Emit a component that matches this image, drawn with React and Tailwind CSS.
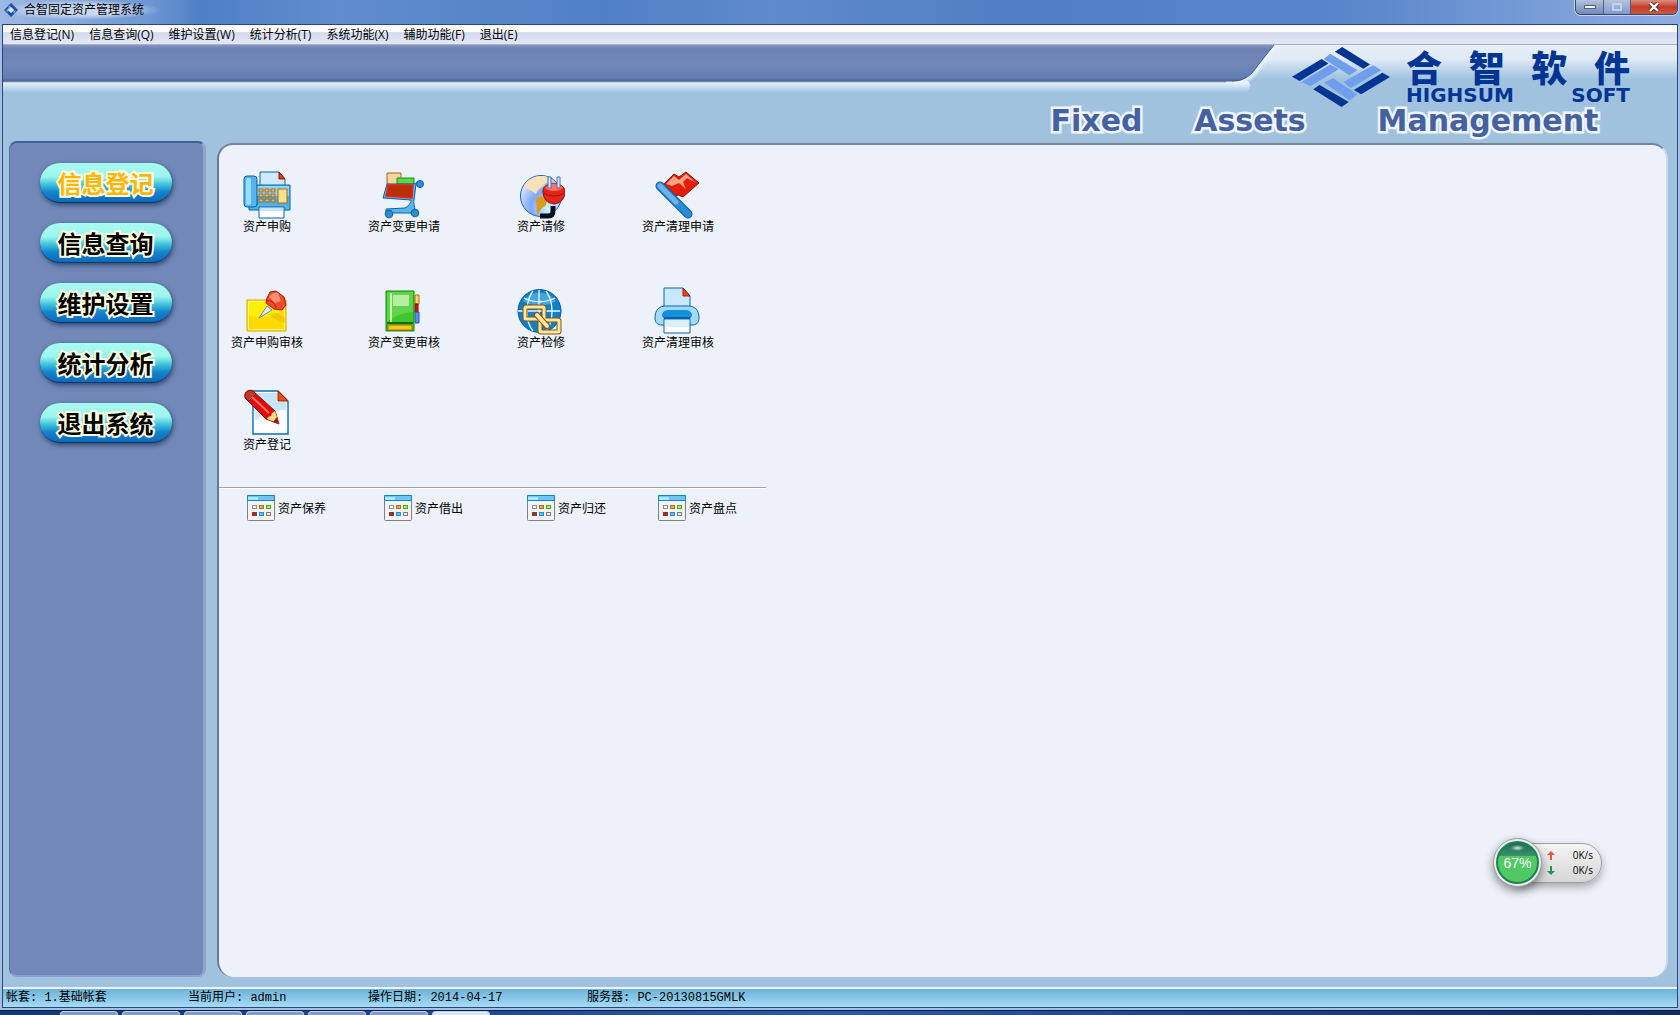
import React from 'react';

const SANS = "font-['Open_Sans','Noto_Sans_CJK_SC',sans-serif]";

const menus = ['信息登记(N)', '信息查询(Q)', '维护设置(W)', '统计分析(T)', '系统功能(X)', '辅助功能(F)', '退出(E)'];

const navItems = ['信息登记', '信息查询', '维护设置', '统计分析', '退出系统'];

const FaxIcon = () => (
  <>
    <path d="M17 14V1h19l6 7v6" fill="#cfe9ff" stroke="#0b67ad" />
    <path d="M36 1v7h6z" fill="#e03a10" stroke="#8c1500" />
    <path d="M6 34h8V14h33v25H6z" fill="#4db4ea" stroke="#0a63a8" />
    <path d="M14 15h32v10H14z" fill="#8fd6fa" />
    <rect x="1" y="5" width="13" height="31" rx="3" fill="#54b5ec" stroke="#0a63a8" />
    <rect x="3" y="7" width="5" height="27" rx="2" fill="#9bdcfb" />
    {[18, 23, 28].map((y) => [16, 22, 28].map((x) => (
      <rect key={`${x}-${y}`} x={x} y={y} width="4" height="3" fill="#f2b650" stroke="#9a5a10" strokeWidth=".8" />
    )))}
    <rect x="35" y="18" width="9" height="14" fill="#ffe08a" stroke="#a8660f" />
    <path d="M16 36h25v11H16z" fill="#fff" stroke="#0a63a8" />
    <path d="M17 37h23v3H17z" fill="#c7e4fa" />
  </>
);

const CartIcon = () => (
  <>
    <path d="M7 13V2h14v12z" fill="#f8d79a" stroke="#9c6320" />
    <path d="M17 13V7h17v6z" fill="#5fd845" stroke="#1f8a1c" />
    <path d="M40 10 34 13H7L3 27l28 2c0 4-3 6-6 8l-19 1v4h28c2-6-1-9 0-13l2-16z" fill="#58b6ea" stroke="#0a63a8" />
    <path d="M8 14h25l-1 13-26-2z" fill="#b83000" stroke="#f0201a" strokeWidth="1.5" />
    <circle cx="40" cy="13" r="3.5" fill="#2a90d4" stroke="#0a5ea2" />
    <circle cx="9" cy="43" r="3.8" fill="#2a90d4" stroke="#0a5ea2" />
    <circle cx="35" cy="42" r="3.8" fill="#2a90d4" stroke="#0a5ea2" />
  </>
);

const PlugIcon = () => (
  <>
    <defs>
      <radialGradient id="globe" cx=".7" cy=".8" r=".9">
        <stop offset="0" stopColor="#d9fbff" />
        <stop offset=".5" stopColor="#7fa6ff" />
        <stop offset="1" stopColor="#f2f4ff" />
      </radialGradient>
    </defs>
    <circle cx="24" cy="25" r="20.5" fill="url(#globe)" stroke="#1c5fb8" />
    <path d="M7 16c3-7 9-11 17-11 6 0 10 2 12 5-5 1-8 1-9 4-2 2-4 3-6 5l-2 4-4-3z" fill="#f5e3b5" />
    <path d="M19 27l5-2 6 4-1 5-5 4-3 6c-3-4 0-7-2-11z" fill="#d99a1e" />
    <path d="M36 35v5c0 4-2 5-5 5h-8" fill="none" stroke="#0a0f20" strokeWidth="5" />
    <path d="M26 20c0-10 21-10 22 0 0 8-4 12-11 13-7-1-11-5-11-13z" fill="#e22718" stroke="#8e0d08" />
    <path d="M28 17c5-6 14-6 18 0-5 4-13 4-18 0z" fill="#ff7563" />
    <path d="M27 22c5 4 15 4 20 0" fill="none" stroke="#a50f0a" />
    <path d="M31 6h3v11h-3zM40 6h3v11h-3z" fill="#dfe8ff" stroke="#4a68b8" />
  </>
);

const FlagIcon = () => (
  <>
    <path d="M10 13 20 3l5 3 7-5 13 11-16 14-5-2-5 2z" fill="#e41c08" stroke="#991008" />
    <path d="m12 13 8-8 5 4 7-6 10 9-9-5-4 4 3 7-7-6-7 3z" fill="#ffa489" />
    <path d="M6 15 34 43" stroke="#0a5fa4" strokeWidth="9" strokeLinecap="round" />
    <path d="M6 15 34 43" stroke="#2b8bd4" strokeWidth="7" strokeLinecap="round" />
    <path d="M6 15 22 31" stroke="#6fb4e4" strokeWidth="5" strokeLinecap="round" />
  </>
);

const PinIcon = () => (
  <>
    <path d="M4 13h39v31H4z" fill="#ffef00" stroke="#d9a400" />
    <path d="M5 28c12 4 25 3 37-6v21H5z" fill="#ffd900" />
    <path d="M5.5 14.5h36v28h-36z" fill="none" stroke="#fff384" />
    <path d="m25 27 9-1 8 5v5c-6-1-11-5-17-9z" fill="#e9b800" opacity=".5" />
    <path d="m16 31 8-12 5 4z" fill="#e3e8f5" stroke="#7884a5" />
    <path d="m24 11 3-6 6-1 8 6 2 8-4 5-8-1-8-6z" fill="#f3482d" stroke="#a31609" />
    <path d="M26 10c2-4 6-5 9-4l3 8-6 2z" fill="#ff8f74" />
    <path d="M24 14c3-2 9 3 9 7" fill="none" stroke="#bb1e0e" />
  </>
);

const BookIcon = () => (
  <>
    <path d="M35 8h4v9h-4z" fill="#ffd36b" stroke="#b36a10" />
    <path d="M35 17h3v8h-3z" fill="#d61010" stroke="#8f0505" />
    <path d="M35 25h4v11h-4z" fill="#5f8df0" stroke="#2850b4" />
    <path d="M6 4h28v40H6z" fill="#3fc72d" stroke="#128a12" />
    <path d="M7 5h26v20c-12 1-20 5-26 10z" fill="#63d24b" />
    <path d="M10 6h2v29h-2z" fill="#c6f5b4" />
    <path d="M13 8h16v11H13z" fill="#b4efa2" />
    <path d="M7 36h26" stroke="#0c7010" strokeWidth="2" />
    <path d="M8 38h24v5H8z" fill="#ffc91c" stroke="#a06c00" />
  </>
);

const LinkIcon = () => (
  <>
    <circle cx="22.5" cy="24" r="21.5" fill="#0f80c8" stroke="#0a569c" />
    <path d="M6 14C14 3 31 3 39 14c-10 6-23 6-33 0z" fill="#5fb4e4" opacity=".7" />
    <path d="M22 3v42M1 24h42M7 11c9 5 22 5 31 0M16 4C8 15 8 34 16 44M29 4c8 11 8 30 0 40" fill="none" stroke="#e6f7ff" strokeWidth="1.3" />
    {['#8a5208', '#ffe6a0'].map((c, i) => (
      <g key={c} fill="none" stroke={c} strokeWidth={i ? 3 : 5} strokeLinejoin="round">
        <rect x="8" y="20" width="19" height="12" rx="1" />
        <rect x="23" y="33" width="19" height="12" rx="1" />
      </g>
    ))}
    <path d="m20 28 10 11" stroke="#8a5208" strokeWidth="6" strokeLinecap="round" />
    <path d="m20 28 10 11" stroke="#ffe6a0" strokeWidth="4" strokeLinecap="round" />
  </>
);

const PrinterIcon = () => (
  <>
    <path d="M10 24V1h19l7 8v15z" fill="#c8e8ff" stroke="#0b67ad" />
    <path d="M29 1v8h7z" fill="#ee4312" stroke="#9c1c00" />
    <path d="M1 31c0-9 5-12 11-12h22c6 0 11 3 11 12 0 5-3 7-7 7H8c-4 0-7-2-7-7z" fill="#a3daf9" stroke="#0a63a8" />
    <path d="M8 29c0-4 3-6 6-6h18c3 0 6 2 6 6l-3 3H11z" fill="#1590dc" />
    <path d="M9 30h28l-2 3H11z" fill="#0661a8" />
    <path d="M10 32h26v14H10z" fill="#fff" stroke="#0a63a8" />
    <path d="M11 33h24v7H11z" fill="#d9effc" />
  </>
);

const PencilIcon = () => (
  <>
    <path d="M10 2h25l10 10v33H10z" fill="#fff" stroke="#0b6db3" strokeWidth="1.4" />
    <path d="M12 4h22v9h9v8c-12 0-22 5-31 10z" fill="#c6e5ff" />
    <path d="M35 2v10h10z" fill="#ef4a10" stroke="#9c1c00" />
    <path d="M2 6c0-3 4-6 8-4l22 20 4 13-13-5L3 10c-1-1-1-3-1-4z" fill="#e00d06" stroke="#8c0a05" />
    <path d="M2 6c0-3 4-6 8-4l3 3-7 7-3-2c-1-1-1-3-1-4z" fill="#c03a2c" stroke="#8c0a05" />
    <path d="m9 8 17 16" stroke="#ff7263" strokeWidth="2" />
    <path d="m32 22-3 2-1 3-3 1-1 2 12 5z" fill="#ffd98a" />
    <path d="m30 33 6 2-2-7z" fill="#9a1a10" />
  </>
);

const TableIcon = () => (
  <svg viewBox="0 0 28 26" className="h-[26px] w-7 shrink-0">
    <rect x=".5" y=".5" width="27" height="25" rx="1" fill="#f2f2f2" stroke="#808080" />
    <path d="M.5.5h27v5H.5z" fill="#6cc6f8" stroke="#1782c0" />
    <path d="M1 2h10v3H1z" fill="#a5ecff" />
    {[
      [5, 10, '#fff', '#8f8f8f'], [12, 10, '#efb24a', '#a86a25'], [19, 10, '#aef26d', '#45a812'],
      [5, 17, '#d81a0c', '#704040'], [12, 17, '#63c1fb', '#1d8fdc'], [19, 17, '#e8e8e8', '#7d7d7d'],
    ].map(([x, y, fill, stroke]) => (
      <rect key={`${x}-${y}`} x={x + 0.5} y={y + 0.5} width="4" height="3" fill={fill} stroke={stroke} />
    ))}
  </svg>
);

const rows = [
  {
    gap: 'pb-[54px]',
    items: [['资产申购', FaxIcon], ['资产变更申请', CartIcon], ['资产请修', PlugIcon], ['资产清理申请', FlagIcon]],
  },
  {
    gap: 'pb-10',
    items: [['资产申购审核', PinIcon], ['资产变更审核', BookIcon], ['资产检修', LinkIcon], ['资产清理审核', PrinterIcon]],
  },
  { gap: 'pb-9', items: [['资产登记', PencilIcon]] },
];

const shortcuts = ['资产保养', '资产借出', '资产归还', '资产盘点'];

const Diamond = ({ className }) => (
  <svg viewBox="33 142 295 180" className={className}>
    <g fill="#003594">
      <path d="M184 142l84 52-20 13-86-51z" />
      <path d="M33 231l89-53 21 13-87 53z" />
      <path d="M328 232l-23-13-86 52 22 13z" />
      <path d="M116 256l-19 13 85 53 22-15z" />
    </g>
    <g fill="#6f9fec">
      <path d="M148 162l82 50-24 15-78-49z" />
      <path d="M148 194l26 15-86 51-26-13z" />
      <path d="M277 197l25 15-92 53-22-18z" />
      <path d="M157 236l73 49-24 18-76-54z" />
    </g>
  </svg>
);

const TitleBar = () => (
  <div className="flex h-6 shrink-0 items-start justify-between bg-[linear-gradient(to_right,#9db9e4,#6d96d2_9%,#4f80c4_12%,#5f8dce_20%,#5080c4_36%,#5d8bcc_46%,#4f7ec2_60%,#5886ca_80%,#8fade0)]">
    <div className="flex h-5 items-center gap-1.5 bg-[radial-gradient(closest-side,#c8d8f0_50%,transparent)] pr-4 pl-1">
      <svg viewBox="0 0 14 14" className="size-[14px]">
        <path d="M7 0l7 7-7 7-7-7z" fill="#1b4fa8" />
        <path d="M5.5 2.5l5 5-1.5 1.5-5-5z" fill="#7aa6ee" />
        <path d="M2 7.5l3-3 1.5 1.5-3 3zM12 6.5l-3 3 1.5 1z" fill="#7aa6ee" />
        <path d="M7 4l3 3-3 3-3-3z" fill="#e6effd" />
      </svg>
      <h1 className="text-xs text-black">合智固定资产管理系统</h1>
    </div>
    <div className="mr-[2px] flex h-[15px] overflow-hidden rounded-b-md border border-t-0 border-[#33466b] shadow-[0_0_0_1px_#c5d6ef]">
      <button aria-label="最小化" className="flex w-7 items-center justify-center border-r border-[#4a5e86] bg-linear-to-b from-[#b3c3de] to-[#7088b5]">
        <span className="h-1 w-3 border border-[#55617a] bg-white" />
      </button>
      <button aria-label="最大化" className="flex w-[27px] items-center justify-center border-r border-[#4a5e86] bg-linear-to-b from-[#b3c3de] to-[#7f9acb]">
        <span className="h-2 w-2.5 border-2 border-[#c5d1e6]" />
      </button>
      <button aria-label="关闭" className="flex w-[46px] items-center justify-center bg-linear-to-b from-[#dc8e83] via-[#c23a28] to-[#cc5a40]">
        <svg viewBox="0 0 12 10" className="h-[10px] w-3">
          <path d="M2 1l8 8M10 1l-8 8" stroke="#46342f" strokeWidth="4" />
          <path d="M2 1l8 8M10 1l-8 8" stroke="#fff" strokeWidth="2.4" />
        </svg>
      </button>
    </div>
  </div>
);

const MenuBar = () => (
  <nav className="flex h-5 shrink-0 items-center gap-[15px] border-b border-[#a9b0c4] bg-linear-to-b from-white from-35% via-[#d5dcee] via-40% to-[#e2e7f5] pl-[7px]">
    {menus.map((m) => (
      <button key={m} className="text-xs leading-4 text-black">
        {m}
      </button>
    ))}
  </nav>
);

const Banner = () => (
  <header className="shrink-0 bg-[linear-gradient(to_bottom,#e8f0f8,#dfeaf5_14px,#a0c2df_34px)]">
    <div className="flex h-[62px] items-start">
      <div className="h-12 flex-1 bg-[linear-gradient(to_bottom,#8793bd,#6c80b3_4px,#7288b8_18px,#637db2_33px,#4b638f_36px,#e4f0fa_38px,#a0c2df)]" />
      <svg viewBox="0 0 60 48" className="h-12 w-[60px]">
        <defs>
          <linearGradient id="band" gradientUnits="userSpaceOnUse" x1="0" x2="0" y1="0" y2="36">
            <stop offset="0" stopColor="#8793bd" />
            <stop offset=".11" stopColor="#6c80b3" />
            <stop offset=".5" stopColor="#7288b8" />
            <stop offset=".92" stopColor="#637db2" />
            <stop offset="1" stopColor="#4b638f" />
          </linearGradient>
          <linearGradient id="under" gradientUnits="userSpaceOnUse" x1="0" x2="0" y1="38" y2="48">
            <stop offset="0" stopColor="#e4f0fa" />
            <stop offset="1" stopColor="#a0c2df" />
          </linearGradient>
        </defs>
        <path d="M0 36h22c4 4 2 8-2 12H0z" fill="url(#under)" />
        <g fill="none" stroke="#eaf3fb">
          <path d="M8 37c14 0 20-9 26-17L50 0" strokeWidth="8" opacity=".35" />
          <path d="M8 37c14 0 20-9 26-17L50 0" strokeWidth="4" opacity=".7" />
        </g>
        <path d="M0 0h48L33 19C27 27 22 36 6 36.5H0z" fill="url(#band)" />
        <path d="M48 0L33 19C27 27 22 36 6 36" fill="none" stroke="#4b5f90" />
      </svg>
      <Diamond className="mt-[2px] ml-[6px] h-[60px] w-[98px]" />
      <div className="mr-[47px] ml-4 w-56 pt-0.5 text-[#003594]">
        <p className="flex justify-between font-['Noto_Sans_CJK_SC',sans-serif] text-[36px] leading-[38px] font-black">
          {[...'合智软件'].map((c) => (
            <span key={c}>{c}</span>
          ))}
        </p>
        <p className="flex justify-between font-['DejaVu_Sans',sans-serif] text-[20px] leading-5 font-bold">
          <span>HIGHSUM</span>
          <span>SOFT</span>
        </p>
      </div>
    </div>
    <div className="flex h-[34px] justify-end pr-11">
      <p className="grid grid-cols-[121px_150px_290px] justify-items-center gap-[18px] font-['DejaVu_Sans',sans-serif] text-[30px] leading-7 font-bold text-[#45619f] [-webkit-text-stroke:5px_#eef5fc] [paint-order:stroke_fill]">
        <span>Fixed</span>
        <span>Assets</span>
        <span>Management</span>
      </p>
    </div>
  </header>
);

const SideBar = () => (
  <aside className="flex w-[197px] shrink-0 flex-col items-center gap-5 rounded-lg border-t-2 border-r-3 border-b-2 border-l border-t-[#455f93] border-r-[#8fa5d0] border-b-[#8aa1d0] border-l-[#5870a3] bg-[#7188b8] pt-5 pr-0.5">
    {navItems.map((item, i) => (
      <button
        key={item}
        className={`h-10 w-[132px] rounded-full border-b border-[#12365c] bg-[linear-gradient(to_bottom,#a8fbf0,#9bf5ee_35%,#3fc3dc_55%,#1482cc_75%,#0a6cc0)] font-['Noto_Sans_CJK_SC',sans-serif] text-2xl leading-9 font-bold shadow-[1px_2px_5px_#31456f] [-webkit-text-stroke:4px_#fdfbdc] [paint-order:stroke_fill] ${i === 0 ? 'text-[#ffb60a]' : 'text-black'}`}
      >
        {item}
      </button>
    ))}
  </aside>
);

const Workspace = () => (
  <main className="relative mt-0.5 flex-1 rounded-2xl border-t-2 border-r-2 border-l-2 border-t-[#75839c] border-r-[#c5dcec] border-l-[#69799c] bg-[#edf2fa] pt-[26px] font-['Noto_Sans_CJK_SC',sans-serif] text-black">
    <div className="w-[547px] border-b border-[#a0a0a4]">
      {rows.map((row) => (
        <div key={row.gap} className={`flex gap-[41px] ${row.gap}`}>
          {row.items.map(([label, Icon]) => (
            <button key={label} className="flex w-24 flex-col items-center text-xs leading-[14px]">
              <svg viewBox="0 0 48 48" className="size-12">
                <Icon />
              </svg>
              {label}
            </button>
          ))}
        </div>
      ))}
    </div>
    <div className="grid w-[547px] grid-cols-[137px_143px_131px_auto] border-t border-white pt-1.5 pl-7">
      {shortcuts.map((label) => (
        <button key={label} className="flex items-center gap-[3px] text-xs">
          <TableIcon />
          {label}
        </button>
      ))}
    </div>

    {/* network speed widget */}
    <div className="absolute right-16 bottom-[90px] flex items-center">
      <div className="z-10 flex size-[49px] items-center justify-center rounded-full border border-[#9a9a9a] bg-[#ececec] shadow-[0_4px_10px_#00000070]">
        <div className="flex size-[43px] items-center justify-center rounded-full border-2 border-[#1b8258] bg-[radial-gradient(7px_3px_at_50%_5px,#ffffffcc,transparent),linear-gradient(to_bottom,#1d6f50,#3a8f6c_32%,#50c964_33%)] font-['Liberation_Sans',sans-serif] text-sm text-white">
          67%
        </div>
      </div>
      <div className="-ml-6 flex h-10 w-[84px] flex-col justify-center rounded-r-full border border-[#a0a0a0] bg-linear-to-b from-[#f4f4f4] to-[#d6d6d6] pr-2 pl-7 font-['Open_Sans',sans-serif] text-[10px] leading-[15px] shadow-[0_4px_8px_#00000050]">
        {[['up', '#e8583c', 'M4 0l4 4H5v5H3V4H0z'], ['down', '#25945a', 'M4 9L0 5h3V0h2v5h3z']].map(([id, color, d]) => (
          <p key={id} className="flex items-center justify-between">
            <svg viewBox="0 0 8 9" className="h-[9px] w-2">
              <path d={d} fill={color} />
            </svg>
            0K/s
          </p>
        ))}
      </div>
    </div>
  </main>
);

const StatusBar = () => (
  <footer className="grid h-5 shrink-0 grid-cols-[182px_180px_219px_auto] items-center border-t-2 border-[#e9f4fb] bg-linear-to-b from-[#6cb2d8] to-[#a5dcf8] pl-[3px] font-['Liberation_Mono','Noto_Sans_CJK_SC',monospace] text-xs text-black">
    <span>帐套: 1.基础帐套</span>
    <span>当前用户: admin</span>
    <span>操作日期: 2014-04-17</span>
    <span>服务器: PC-20130815GMLK</span>
  </footer>
);

// only the upper edge of the taskbar is on screen
const TaskBar = () => (
  <div className="flex h-[5px] shrink-0 gap-1 border-t border-[#0c1d45] bg-linear-to-r from-[#0f3a78] via-[#2a59a8] to-[#0f2c66] pl-[60px]">
    {['a', 'b', 'c', 'd', 'e', 'f', 'g'].map((k) => (
      <div key={k} className={`w-[58px] rounded-t-sm border border-b-0 border-[#c3d3ea] ${k === 'g' ? 'bg-[#dbe6f4]' : 'bg-[#7f9cc9]'}`} />
    ))}
  </div>
);

export default function App() {
  return (
    <div className={`flex h-screen flex-col overflow-hidden bg-[#a5c0e6] ${SANS}`}>
      <TitleBar />
      <div className="mx-[2px] mb-[2px] flex min-h-0 flex-1 flex-col border border-[#2b4675] bg-[#a0c2df]">
        <MenuBar />
        <Banner />
        <div className="flex min-h-0 flex-1 gap-[11px] pr-[9px] pb-[10px] pl-[6px]">
          <SideBar />
          <Workspace />
        </div>
        <StatusBar />
      </div>
      <TaskBar />
    </div>
  );
}
